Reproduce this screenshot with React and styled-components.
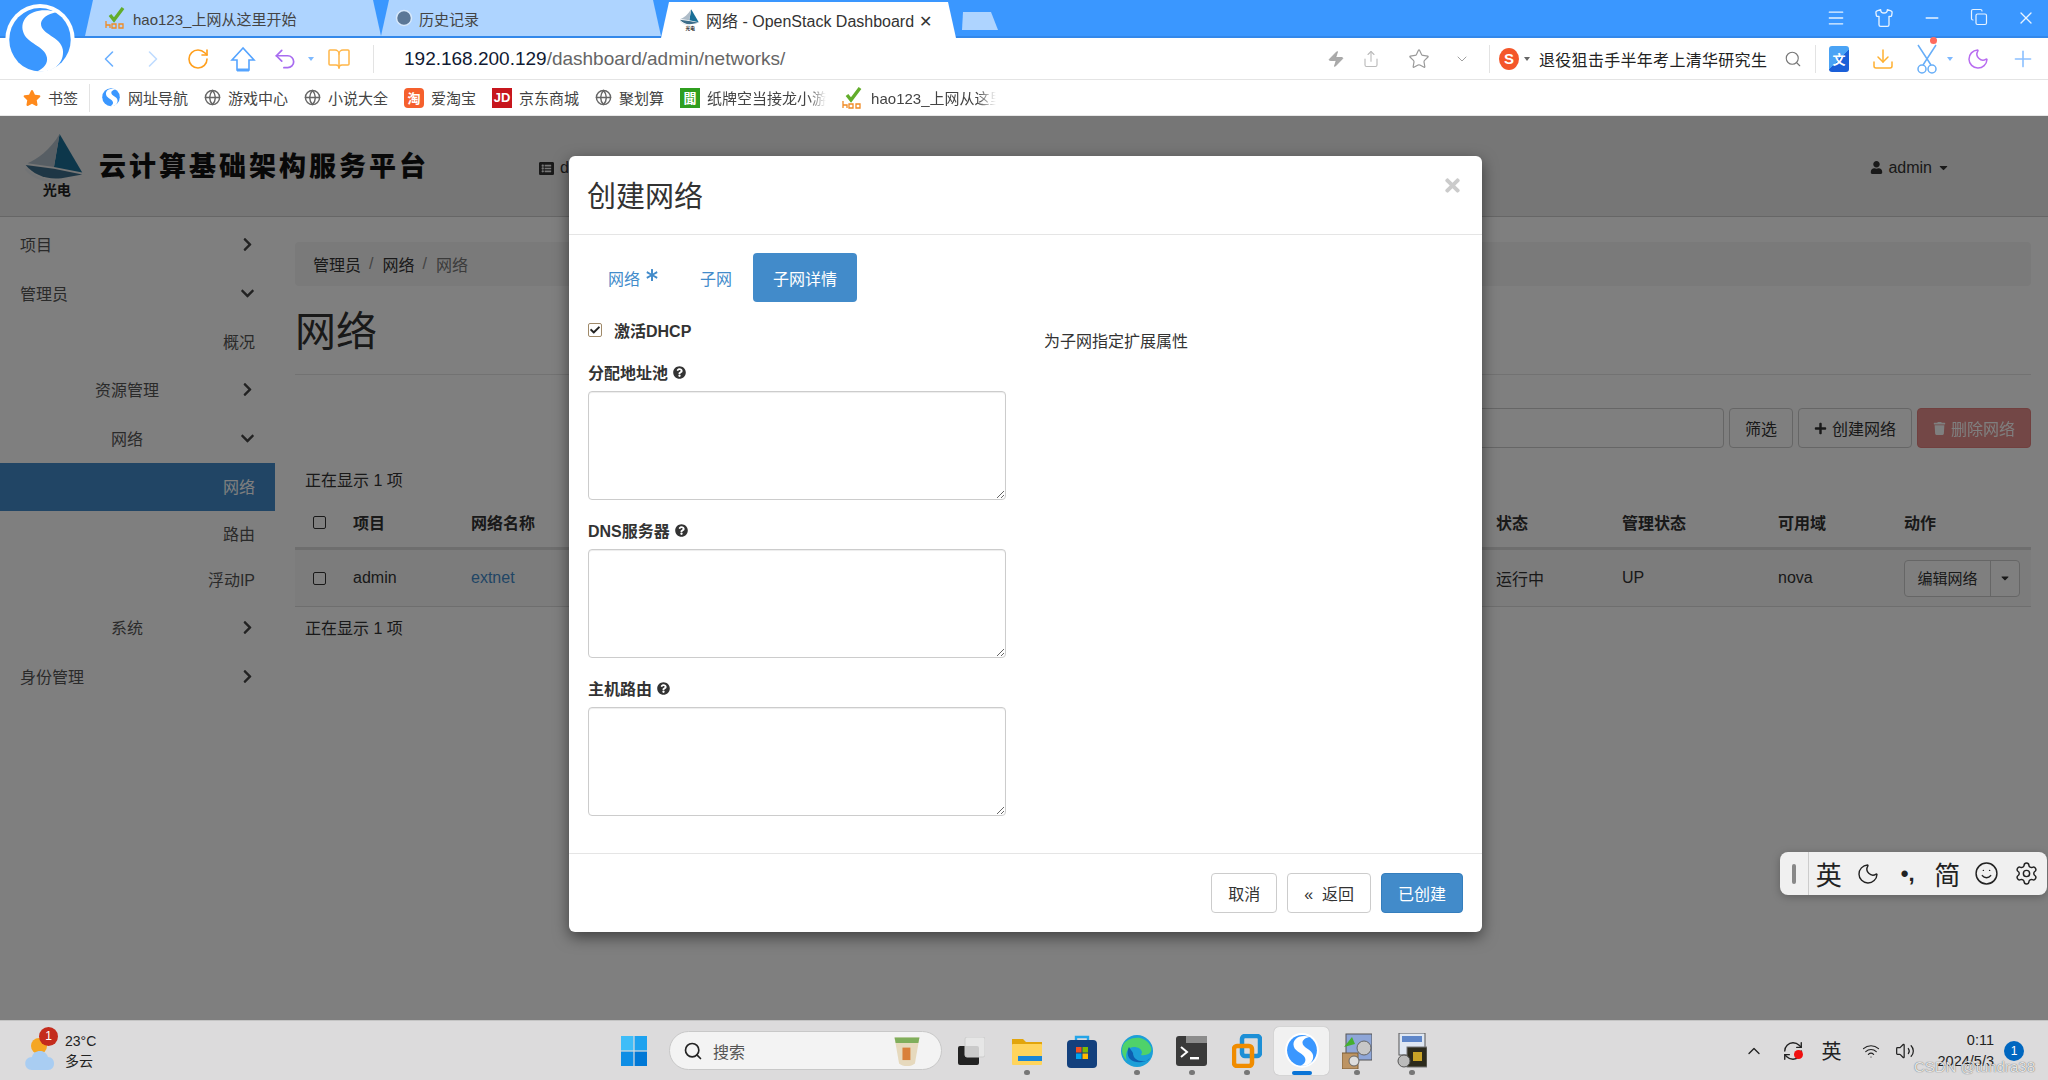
import React from "react";
import styled, { createGlobalStyle } from "styled-components";
import {
  ChevronLeft, ChevronRight, RotateCw, Undo2, BookOpen, Zap, Share, Star, ChevronDown, Search,
  Download, Moon, Plus, Menu, Shirt, Minus, Copy, X, Globe, Smile, Settings, Wifi, Volume2,
  ChevronUp, RefreshCw, Clock,
} from "lucide-react";
import {
  FaChevronRight, FaChevronDown, FaUser, FaCaretDown, FaPlus, FaTrash, FaQuestionCircle, FaAsterisk,
  FaTimes, FaListAlt, FaCheck, FaStar,
} from "react-icons/fa";

const GlobalStyle = createGlobalStyle`
  html, body { margin: 0; padding: 0; height: 1080px; overflow: hidden; background: #fff; }
  body { font-family: "Liberation Sans", "Noto Sans CJK SC", sans-serif; font-size: 16px; color: #333; }
  * { box-sizing: border-box; }
`;

const Screen = styled.div`
  width: 2048px;
  height: 1080px;
  display: flex;
  flex-direction: column;
  position: relative;
  overflow: hidden;
`;

/* ---------- browser chrome ---------- */
const TabStrip = styled.div`
  height: 38px;
  flex: none;
  background: #3a97ff;
  border-bottom: 2px solid #3388ea;
  display: flex;
  align-items: flex-end;
  padding-left: 85px;
`;
const BrowserTab = styled.div`
  width: ${(p) => p.$w}px;
  height: 36px;
  flex: none;
  display: flex;
  align-items: center;
  gap: 6px;
  padding-left: ${(p) => p.$pad}px;
  font-size: ${(p) => (p.$active ? 16 : 15)}px;
  white-space: nowrap;
  color: ${(p) => (p.$active ? "#333" : "#444")};
  background: ${(p) => (p.$active ? "#fff" : "#aed4ff")};
  clip-path: polygon(8px 0, calc(100% - 8px) 0, 100% 100%, 0 100%);
  margin-bottom: ${(p) => (p.$active ? "-2px" : "0")};
`;
const NewTab = styled.div`
  width: 40px;
  height: 18px;
  margin: 0 0 6px 2px;
  background: #aed4ff;
  clip-path: polygon(5px 0, 33px 0, 100% 100%, 4px 100%);
`;
const WindowControls = styled.div`
  margin-left: auto;
  align-self: center;
  display: flex;
  gap: 28px;
  padding-right: 12px;
  color: #e8f3ff;
`;
const BrowserLogo = styled.div`
  position: absolute;
  left: 5px;
  top: 4px;
`;
const Toolbar = styled.div`
  height: 42px;
  flex: none;
  background: #fff;
  border-bottom: 1px solid #e4e4e4;
  display: flex;
  align-items: center;
  padding-left: 100px;
`;
const ToolSlot = styled.span`
  position: relative;
  width: ${(p) => p.$w || 44}px;
  flex: none;
  display: flex;
  justify-content: center;
  align-items: center;
  color: ${(p) => p.$c || "#999"};
  svg { flex: none; }
`;
const ToolSep = styled.span`
  width: 1px;
  height: 28px;
  flex: none;
  background: #e3e3e3;
  margin: ${(p) => p.$m || "0 8px"};
`;
const Url = styled.div`
  font-size: 19px;
  width: 920px;
  flex: none;
  margin-left: 30px;
  color: #666;
  white-space: nowrap;
  b { font-weight: 400; color: #111a33; }
`;
const SearchHint = styled.span`
  font-size: 16px;
  letter-spacing: 0.3px;
  color: #222;
  white-space: nowrap;
  width: 232px;
  flex: none;
`;
const SogouBadge = styled.span`
  width: 20px;
  height: 22px;
  margin-left: 9px;
  border-radius: 50%;
  background: #f4562a;
  color: #fff;
  font-weight: 700;
  font-size: 15px;
  display: flex;
  align-items: center;
  justify-content: center;
  flex: none;
`;
const TinyCaret = styled.span`
  width: 0;
  height: 0;
  flex: none;
  margin: ${(p) => p.$m || "0 5px"};
  border-left: 3px solid transparent;
  border-right: 3px solid transparent;
  border-top: 4px solid ${(p) => p.$c || "#666"};
`;
const CutBadge = styled.span`
  position: absolute;
  right: 0;
  top: -7px;
  width: 7px;
  height: 7px;
  border-radius: 50%;
  background: #ff6b5e;
`;
const BookmarkBar = styled.div`
  height: 36px;
  flex: none;
  background: #fff;
  border-bottom: 1px solid #e8e8e8;
  display: flex;
  align-items: center;
  padding-left: 23px;
  font-size: 15px;
  color: #444;
`;
const Bookmark = styled.span`
  display: flex;
  align-items: center;
  gap: 7px;
  margin-right: ${(p) => p.$mr || 16}px;
  white-space: nowrap;
  flex: none;
`;
const BookmarkFade = styled.span`
  width: ${(p) => p.$w}px;
  overflow: hidden;
  white-space: nowrap;
  -webkit-mask-image: linear-gradient(90deg, #000 85%, transparent);
  mask-image: linear-gradient(90deg, #000 85%, transparent);
`;
const SquareIcon = styled.span`
  width: 20px;
  height: ${(p) => p.$h || 20}px;
  flex: none;
  display: flex;
  align-items: center;
  justify-content: center;
  font-size: 13px;
  font-weight: 700;
  color: #fff;
  background: ${(p) => p.$bg};
  border-radius: ${(p) => p.$r || 0}px;
`;

/* ---------- dashboard behind the dialog ---------- */
const Page = styled.div`
  flex: 1;
  position: relative;
  display: flex;
  flex-direction: column;
  min-height: 0;
  background: #fff;
`;
const TopNav = styled.header`
  height: 101px;
  flex: none;
  display: flex;
  align-items: center;
  background: #ececec;
  border-bottom: 1px solid #ccc;
  padding: 0 98px 0 20px;
`;
const PlatformTitle = styled.div`
  font-family: "Noto Sans CJK SC", sans-serif;
  font-weight: 900;
  font-size: 27px;
  letter-spacing: 3px;
  color: #111;
  margin: 0 0 4px 13px;
  white-space: nowrap;
  width: 440px;
  flex: none;
`;
const NavProject = styled.div`
  display: flex;
  align-items: center;
  gap: 6px;
  margin-top: 4px;
`;
const UserMenu = styled.div`
  margin-left: auto;
  margin-top: 3px;
  display: flex;
  align-items: center;
  gap: 5px;
`;
const Body = styled.div`
  flex: 1;
  display: flex;
  min-height: 0;
`;
const Sidebar = styled.nav`
  width: 275px;
  flex: none;
  padding-top: 3px;
`;
const NavRow = styled.div`
  height: ${(p) => p.$h}px;
  display: flex;
  align-items: center;
  gap: 6px;
  padding: 0 20px;
  color: ${(p) => (p.$active ? "#fff" : "#555")};
  background: ${(p) => (p.$active ? "#428bca" : "transparent")};
`;
const NavLabel = styled.span`
  flex: 1;
  margin-top: -2px;
  text-align: ${(p) => p.$align};
`;
const Main = styled.main`
  flex: 1;
  min-width: 0;
  padding: 25px 17px 0 20px;
`;
const Breadcrumb = styled.div`
  height: 44px;
  background: #f5f5f5;
  border-radius: 4px;
  display: flex;
  align-items: center;
  padding-left: 18px;
  color: #333;
  span { margin-right: 9px; color: #888; }
  i { font-style: normal; color: #777; }
  em { font-style: normal; margin-right: 8px; }
`;
const PageTitle = styled.h1`
  margin: 0;
  height: 89px;
  line-height: 92px;
  font-size: 41px;
  font-weight: 400;
  border-bottom: 1px solid #e5e5e5;
`;
const Actions = styled.div`
  margin-top: 33px;
  height: 40px;
  display: flex;
  justify-content: flex-end;
  gap: 5px;
`;
const FilterInput = styled.div`
  width: 500px;
  border: 1px solid #ccc;
  border-radius: 4px;
`;
const Btn = styled.button`
  font: inherit;
  height: 40px;
  padding: 0 ${(p) => p.$px || 15}px;
  border: 1px solid ${(p) => (p.$kind === "primary" ? "#357ebd" : p.$kind === "danger" ? "#d43f3a" : "#ccc")};
  border-radius: 4px;
  display: flex;
  align-items: center;
  gap: 5px;
  white-space: nowrap;
  color: ${(p) => (p.$kind ? "#fff" : "#333")};
  background: ${(p) => (p.$kind === "primary" ? "#428bca" : p.$kind === "danger" ? "#d9534f" : "#fff")};
  opacity: ${(p) => (p.$kind === "danger" ? 0.65 : 1)};
`;
const Count = styled.div`
  padding-left: 10px;
  height: 22px;
  line-height: 22px;
  margin-top: ${(p) => p.$mt}px;
`;
const GridRow = styled.div`
  display: grid;
  grid-template-columns: 58px 118px 1025px 126px 156px 126px 1fr;
  align-items: center;
  height: ${(p) => p.$h}px;
  padding-top: ${(p) => (p.$head ? 5 : 0)}px;
  font-weight: ${(p) => (p.$head ? 700 : 400)};
  background: ${(p) => (p.$head ? "transparent" : "#f9f9f9")};
  border-bottom: ${(p) => (p.$head ? "3px solid #ddd" : "1px solid #ddd")};
`;
const RowCheck = styled.span`
  width: 13px;
  height: 13px;
  margin-left: 18px;
  border: 1px solid #333;
  border-radius: 2px;
  background: #fff;
`;
const TableLink = styled.span`
  color: #428bca;
`;
const SplitBtn = styled.div`
  width: 116px;
  height: 37px;
  display: flex;
  align-items: center;
  border: 1px solid #ccc;
  border-radius: 4px;
  background: #fff;
  font-size: 15px;
  span:first-child { width: 86px; text-align: center; border-right: 1px solid #ccc; line-height: 35px; }
  span:last-child { flex: 1; display: flex; justify-content: center; }
`;

/* ---------- dialog ---------- */
const Backdrop = styled.div`
  position: absolute;
  inset: 0;
  background: rgba(0, 0, 0, 0.5);
  padding: 40px 0 0 569px;
`;
const Modal = styled.div`
  width: 913px;
  height: 776px;
  background: #fff;
  border-radius: 6px;
  box-shadow: 0 5px 15px rgba(0, 0, 0, 0.5);
  display: flex;
  flex-direction: column;
`;
const ModalHead = styled.div`
  height: 79px;
  flex: none;
  display: flex;
  align-items: center;
  justify-content: space-between;
  padding: 0 19px 0 18px;
  border-bottom: 1px solid #e5e5e5;
`;
const ModalTitle = styled.h4`
  margin: 0 0 3px;
  font-size: 29px;
  font-weight: 400;
`;
const CloseIcon = styled.span`
  color: #cbcbcb;
  display: flex;
  margin-bottom: 20px;
`;
const ModalBody = styled.div`
  flex: 1;
  padding: 18px 19px 0;
`;
const Pills = styled.div`
  display: flex;
  height: 49px;
  margin-bottom: 16px;
`;
const Pill = styled.div`
  height: 49px;
  padding: 0 20px;
  margin-right: ${(p) => p.$mr || 0}px;
  border-radius: 4px;
  display: flex;
  align-items: center;
  gap: 6px;
  color: ${(p) => (p.$active ? "#fff" : "#428bca")};
  background: ${(p) => (p.$active ? "#428bca" : "transparent")};
  svg { margin-top: -6px; }
`;
const Columns = styled.div`
  display: flex;
`;
const LeftCol = styled.div`
  width: 418px;
  flex: none;
`;
const RightCol = styled.div`
  margin: 0 0 0 38px;
  padding-top: 10px;
`;
const CheckRow = styled.div`
  height: 24px;
  display: flex;
  align-items: center;
  font-weight: 700;
  color: #333;
  margin-bottom: 18px;
`;
const CheckBox = styled.span`
  width: 14px;
  height: 14px;
  margin: 0 12px 0 0;
  border: 1px solid #a08a6a;
  border-radius: 2px;
  display: flex;
  align-items: center;
  justify-content: center;
  color: #222;
`;
const FieldLabel = styled.label`
  display: flex;
  align-items: center;
  gap: 5px;
  font-weight: 700;
  height: 24px;
`;
const Textarea = styled.textarea`
  display: block;
  width: 418px;
  height: 109px;
  margin: 7px 0 ${(p) => p.$mb}px;
  border: 1px solid #ccc;
  border-radius: 4px;
  box-shadow: inset 0 1px 1px rgba(0, 0, 0, 0.075);
  outline: none;
  font: inherit;
`;
const ModalFoot = styled.div`
  height: 79px;
  flex: none;
  border-top: 1px solid #e5e5e5;
  display: flex;
  justify-content: flex-end;
  align-items: flex-start;
  gap: 10px;
  padding: 19px 19px 0 0;
`;

/* ---------- floating IME bar ---------- */
const ImeBar = styled.div`
  position: absolute;
  left: 1780px;
  top: 736px;
  width: 267px;
  height: 43px;
  background: #f0f0f0;
  border-radius: 8px;
  box-shadow: 0 2px 8px rgba(0, 0, 0, 0.25);
  display: flex;
  align-items: center;
  color: #222;
  font-size: 26px;
`;
const ImeGrip = styled.span`
  width: 29px;
  height: 100%;
  flex: none;
  border-right: 1px solid #ccc;
  display: flex;
  align-items: center;
  justify-content: center;
  &::before {
    content: "";
    width: 4px;
    height: 20px;
    border-radius: 2px;
    background: #888;
  }
`;
const ImeCell = styled.span`
  width: 39.5px;
  flex: none;
  text-align: center;
  display: flex;
  justify-content: center;
  font-size: ${(p) => (p.$punct ? 22 : 26)}px;
  font-weight: ${(p) => (p.$punct ? 700 : 400)};
`;

/* ---------- windows taskbar ---------- */
const Taskbar = styled.div`
  height: 60px;
  flex: none;
  background: #dcdbdc;
  border-top: 1px solid #c4c4c4;
  display: flex;
  align-items: center;
  position: relative;
`;
const Weather = styled.div`
  width: 621px;
  flex: none;
  display: flex;
  align-items: center;
  padding-left: 25px;
  gap: 9px;
  font-size: 14px;
  line-height: 20px;
  color: #222;
`;
const WeatherIcon = styled.div`
  position: relative;
  width: 31px;
  height: 36px;
  margin-top: 6px;
`;
const RedDot = styled.span`
  position: absolute;
  left: 14px;
  top: -9px;
  width: 19px;
  height: 19px;
  border-radius: 50%;
  background: #c42b1c;
  color: #fff;
  font-size: 12px;
  line-height: 19px;
  text-align: center;
`;
const WinSearch = styled.div`
  width: 273px;
  height: 39px;
  margin: 0 13px 0 22px;
  border-radius: 20px;
  background: #f3f3f3;
  border: 1px solid #c8c8c8;
  display: flex;
  align-items: center;
  padding: 0 20px 0 13px;
  gap: 10px;
  color: #555;
  flex: none;
  span { flex: 1; }
`;
const TaskViewSlot = styled.div`
  width: 32px;
  margin-right: 12px;
  flex: none;
  display: flex;
  justify-content: center;
`;
const TaskSlot = styled.div`
  position: relative;
  width: 55px;
  height: 48px;
  flex: none;
  display: flex;
  align-items: center;
  justify-content: center;
  border-radius: 5px;
  background: ${(p) => (p.$active ? "#f1f1f1" : "transparent")};
  box-shadow: ${(p) => (p.$active ? "0 0 1px rgba(0,0,0,.3)" : "none")};
  &::after {
    content: "";
    display: ${(p) => (p.$dot ? "block" : "none")};
    position: absolute;
    left: 50%;
    bottom: 0;
    transform: translateX(-50%);
    width: ${(p) => (p.$active ? 20 : 6)}px;
    height: ${(p) => (p.$active ? 4 : 5)}px;
    border-radius: 3px;
    background: ${(p) => (p.$active ? "#0a74d6" : "#777")};
  }
`;
const Tray = styled.div`
  margin-left: auto;
  display: flex;
  align-items: center;
  color: #222;
  font-size: 20px;
  padding-right: 24px;
`;
const TrayCell = styled.span`
  width: ${(p) => p.$w || 39}px;
  display: flex;
  justify-content: center;
  position: relative;
`;
const RecDot = styled.span`
  position: absolute;
  left: 21px;
  top: 10px;
  width: 9px;
  height: 9px;
  border-radius: 50%;
  background: #f01010;
`;
const Clocks = styled.div`
  width: 74px;
  text-align: right;
  font-size: 14.5px;
  line-height: 21px;
  color: #222;
`;
const NotifyDot = styled.span`
  width: 20px;
  height: 20px;
  margin-left: 10px;
  border-radius: 50%;
  background: #0067c0;
  color: #fff;
  font-size: 12px;
  line-height: 20px;
  text-align: center;
`;
const Watermark = styled.div`
  position: absolute;
  right: 13px;
  bottom: 5px;
  font-size: 15px;
  color: rgba(255, 255, 255, 0.85);
  text-shadow: 0 0 1px rgba(40, 40, 40, 0.9);
`;

/* ---------- drawings ---------- */
const HaoIcon = () => (
  <svg width="22" height="22" viewBox="0 0 22 22">
    <path d="M5 8l4 5 9-12" fill="none" stroke="#62ad2b" strokeWidth="3.4" />
    <path d="M1 14v7M1 18h4v3M7 17h4v4H7zM14 17h4v4h-4z" fill="none" stroke="#f08a24" strokeWidth="1.3" />
  </svg>
);
const SailLogo = ({ size = 70 }) => (
  <svg width={size} height={size} viewBox="0 0 70 70" style={{ flex: "none" }}>
    <path d="M42 1L66 42 36 36z" fill="#1a6f97" />
    <path d="M42 1L36 36 8 32C18 28 32 18 42 1z" fill="#aebcc8" />
    <path d="M6 34L36 38 66 44 44 48C28 50 14 44 6 34z" fill="#3d6d8a" />
    <path d="M6 38c10 12 26 14 36 13" fill="none" stroke="#e2e6ea" strokeWidth="2.5" />
    <text x="24" y="66" fontSize="15" fontWeight="700" fill="#222" fontFamily="Noto Sans CJK SC, sans-serif">光电</text>
  </svg>
);
const SogouLogo = ({ size = 70 }) => (
  <svg width={size} height={size * 1.02} viewBox="0 0 70 72">
    <ellipse cx="35" cy="36" rx="35" ry="36" fill="#fff" />
    <ellipse cx="35" cy="36" rx="31" ry="32" fill="#3a97ff" />
    <path d="M52 8C28 2 14 14 18 28c3 12 22 14 24 26 1 6-3 11-10 14 16 2 28-8 26-22-2-13-22-15-22-26 0-5 6-10 16-12z" fill="#fff" />
  </svg>
);
const HomeArrow = () => (
  <svg width="26" height="28" viewBox="0 0 26 28" fill="none" stroke="#55a4ff" strokeWidth="1.6">
    <path d="M13 3L2 15h5v10h12V15h5z" />
    <path d="M7 25h12" strokeWidth="3" />
  </svg>
);
const CutIcon = () => (
  <svg width="22" height="30" viewBox="0 0 22 30" fill="none" stroke="#67aef8" strokeWidth="1.5">
    <path d="M2 1l13 20M20 1L7 21" />
    <circle cx="6" cy="25" r="4" />
    <circle cx="16" cy="25" r="4" />
  </svg>
);
const WinLogo = () => (
  <svg width="26" height="30" viewBox="0 0 26 30">
    <rect width="12.4" height="14.4" fill="#3fbdf8" />
    <rect x="13.6" width="12.4" height="14.4" fill="#1ea2ef" />
    <rect y="15.6" width="12.4" height="14.4" fill="#0f8ee5" />
    <rect x="13.6" y="15.6" width="12.4" height="14.4" fill="#0078d6" />
  </svg>
);
const TaskView = () => (
  <svg width="27" height="28" viewBox="0 0 27 28">
    <rect x="0" y="9" width="21" height="19" rx="2" fill="#222" />
    <rect x="7" y="0" width="20" height="20" rx="2" fill="#e8e8e8" fillOpacity=".85" stroke="#ccc" />
  </svg>
);
const Explorer = () => (
  <svg width="30" height="28" viewBox="0 0 30 28">
    <path d="M0 2h11l3 3h16v5H0z" fill="#e2a50c" />
    <rect y="7" width="30" height="21" rx="1" fill="#ffd45c" />
    <rect x="6" y="19" width="24" height="5" fill="#1b86d6" />
  </svg>
);
const Store = () => (
  <svg width="30" height="34" viewBox="0 0 30 34">
    <path d="M9 7V3h12v4" fill="none" stroke="#25a5e8" strokeWidth="2.4" />
    <rect y="6" width="30" height="28" rx="4" fill="#13407d" />
    <rect x="9" y="13" width="5.5" height="5.5" fill="#f25022" />
    <rect x="15.5" y="13" width="5.5" height="5.5" fill="#7fba00" />
    <rect x="9" y="19.5" width="5.5" height="5.5" fill="#00a4ef" />
    <rect x="15.5" y="19.5" width="5.5" height="5.5" fill="#ffb900" />
  </svg>
);
const Edge = () => (
  <svg width="32" height="32" viewBox="0 0 32 32">
    <circle cx="16" cy="16" r="16" fill="#1c9fd8" />
    <path d="M2 10C6 2 24-2 30 12c2 6-4 9-10 8 4-6-6-10-11-7-4 3-5 8-3 13C1 21 0 15 2 10z" fill="#4fd26a" />
    <path d="M12 18c0 6 6 9 12 8 2 0 4-1 5-3-4 5-15 6-20 1-3-3-3-9-1-12 1 2 3 4 4 6z" fill="#0d5fb0" />
  </svg>
);
const Terminal = () => (
  <svg width="31" height="30" viewBox="0 0 31 30">
    <rect width="31" height="30" rx="3" fill="#3a3a3a" />
    <rect x="10" width="21" height="7" fill="#8c8c8c" />
    <path d="M5 11l6 5-6 5" fill="none" stroke="#fff" strokeWidth="2" />
    <rect x="14" y="21" width="9" height="2.4" fill="#fff" />
  </svg>
);
const VmWare = () => (
  <svg width="30" height="34" viewBox="0 0 30 34">
    <rect x="10" y="2" width="18" height="20" rx="3" fill="none" stroke="#1d8fd6" strokeWidth="4.5" />
    <rect x="2" y="12" width="18" height="20" rx="3" fill="none" stroke="#f08c00" strokeWidth="4.5" />
  </svg>
);
const BackupApp = () => (
  <svg width="30" height="36" viewBox="0 0 30 36">
    <rect x="4" y="1" width="26" height="26" fill="#8ea6d8" stroke="#555" />
    <circle cx="22" cy="15" r="7" fill="#c7c7c7" stroke="#666" />
    <path d="M2 14l8-10 3 7z" fill="#44b02f" />
    <rect x="0" y="20" width="16" height="16" fill="#bd9463" stroke="#7a5c36" />
    <circle cx="12" cy="28" r="5" fill="#ddd" stroke="#666" />
  </svg>
);
const LockApp = () => (
  <svg width="30" height="36" viewBox="0 0 30 36">
    <rect x="2" y="0" width="26" height="22" fill="#dfe7f2" stroke="#555" />
    <rect x="5" y="3" width="20" height="6" fill="#5e86c9" />
    <rect x="10" y="14" width="20" height="20" fill="#2c2a1c" stroke="#777" />
    <rect x="16" y="19" width="9" height="9" fill="#c9a327" />
    <circle cx="7" cy="28" r="6" fill="#bbb" stroke="#555" />
  </svg>
);
const Teacup = () => (
  <svg width="28" height="34" viewBox="0 0 24 30">
    <path d="M1 3h22l-4 23c-3 3-11 3-14 0z" fill="#e6d9bd" />
    <path d="M1 3h22l-1 5H2z" fill="#7fae5b" />
    <rect x="8" y="12" width="7" height="11" fill="#d9803b" />
  </svg>
);
const WeatherArt = () => (
  <svg width="31" height="36" viewBox="0 0 31 36">
    <circle cx="14" cy="10" r="8" fill="#f5a623" />
    <path d="M7 34c-9 0-9-13 0-13 1-7 13-9 16 0 8 0 8 13 0 13z" fill="#a9cdf2" />
  </svg>
);

const sideItems = [
  { label: "项目", h: 49, align: "left", arrow: "right" },
  { label: "管理员", h: 49, align: "left", arrow: "down" },
  { label: "概况", h: 47, align: "right" },
  { label: "资源管理", h: 49, align: "center", arrow: "right" },
  { label: "网络", h: 49, align: "center", arrow: "down" },
  { label: "网络", h: 48, align: "right", active: true },
  { label: "路由", h: 46, align: "right" },
  { label: "浮动IP", h: 46, align: "right" },
  { label: "系统", h: 49, align: "center", arrow: "right" },
  { label: "身份管理", h: 49, align: "left", arrow: "right" },
];

const dock = [
  { el: <Explorer />, dot: true },
  { el: <Store /> },
  { el: <Edge />, dot: true },
  { el: <Terminal />, dot: true },
  { el: <VmWare />, dot: true },
  { el: <SogouLogo size={34} />, dot: true, active: true },
  { el: <BackupApp />, dot: true },
  { el: <LockApp />, dot: true },
];

export default function App() {
  return (
    <Screen>
      <GlobalStyle />
      <TabStrip>
        <BrowserTab $w={296} $pad={20}><HaoIcon />hao123_上网从这里开始</BrowserTab>
        <BrowserTab $w={280} $pad={14}><Clock size={18} color="#5b7796" fill="#5b7796" stroke="#d6e8fb" />历史记录</BrowserTab>
        <BrowserTab $w={295} $active $pad={17}><SailLogo size={22} />网络 - OpenStack Dashboard ✕</BrowserTab>
        <NewTab />
        <WindowControls>
          <Menu size={20} strokeWidth={1.6} />
          <Shirt size={20} strokeWidth={1.6} />
          <Minus size={20} strokeWidth={1.6} />
          <Copy size={18} strokeWidth={1.6} />
          <X size={20} strokeWidth={1.6} />
        </WindowControls>
      </TabStrip>
      <BrowserLogo><SogouLogo /></BrowserLogo>

      <Toolbar>
        <ToolSlot $w={18} $c="#6cb0ff"><ChevronLeft size={28} strokeWidth={1.4} /></ToolSlot>
        <ToolSlot $w={70} $c="#bfdcff"><ChevronRight size={28} strokeWidth={1.4} /></ToolSlot>
        <ToolSlot $w={20} $c="#ff9f1c"><RotateCw size={24} strokeWidth={1.6} /></ToolSlot>
        <ToolSlot $w={70}><HomeArrow /></ToolSlot>
        <ToolSlot $w={14} $c="#a86cf0"><Undo2 size={26} strokeWidth={1.6} /></ToolSlot>
        <TinyCaret $m="0 0 0 16px" $c="#7db9ff" />
        <ToolSlot $w={50} $c="#ffb648"><BookOpen size={24} strokeWidth={1.5} /></ToolSlot>
        <ToolSep $m="0 0 0 9px" />
        <Url><b>192.168.200.129</b>/dashboard/admin/networks/</Url>
        <ToolSlot $w={24}><Zap size={18} fill="#aaa" strokeWidth={1} /></ToolSlot>
        <ToolSlot $w={46} $c="#bbb"><Share size={18} strokeWidth={1.5} /></ToolSlot>
        <ToolSlot $w={50} $c="#999"><Star size={22} strokeWidth={1.3} /></ToolSlot>
        <ToolSlot $w={36} $c="#999"><ChevronDown size={16} strokeWidth={1.4} /></ToolSlot>
        <ToolSep $m="0 0 0 9px" />
        <SogouBadge>S</SogouBadge>
        <TinyCaret $m="0 9px 0 5px" />
        <SearchHint>退役狙击手半年考上清华研究生</SearchHint>
        <ToolSlot $w={44} $c="#777"><Search size={18} strokeWidth={1.5} /></ToolSlot>
        <ToolSep $m="0 13px 0 0" />
        <SquareIcon $bg="linear-gradient(135deg, #4aa3f5 50%, #1b5fd8 50%)" $r={3} $h={26}>文</SquareIcon>
        <ToolSlot $w={68} $c="#ffb030"><Download size={24} strokeWidth={1.5} /></ToolSlot>
        <ToolSlot $w={20}><CutIcon /><CutBadge /></ToolSlot>
        <TinyCaret $m="0 0 0 10px" $c="#7db9ff" />
        <ToolSlot $w={50} $c="#b86cf0"><Moon size={24} strokeWidth={1.5} /></ToolSlot>
        <ToolSlot $w={40} $c="#8cc0ff"><Plus size={26} strokeWidth={1.5} /></ToolSlot>
      </Toolbar>

      <BookmarkBar>
        <Bookmark $mr={11}><FaStar size={18} color="#ff8a1c" />书签</Bookmark>
        <ToolSep $m="0 11px 0 0" />
        <Bookmark><SogouLogo size={20} />网址导航</Bookmark>
        <Bookmark><Globe size={17} color="#666" />游戏中心</Bookmark>
        <Bookmark><Globe size={17} color="#666" />小说大全</Bookmark>
        <Bookmark><SquareIcon $bg="#f5602d" $r={4}>淘</SquareIcon>爱淘宝</Bookmark>
        <Bookmark><SquareIcon $bg="#c7161d">JD</SquareIcon>京东商城</Bookmark>
        <Bookmark><Globe size={17} color="#666" />聚划算</Bookmark>
        <Bookmark><SquareIcon $bg="#2f9e1f">聞</SquareIcon><BookmarkFade $w={119}>纸牌空当接龙小游戏</BookmarkFade></Bookmark>
        <Bookmark><HaoIcon /><BookmarkFade $w={125}>hao123_上网从这里开始</BookmarkFade></Bookmark>
      </BookmarkBar>

      <Page>
        <TopNav>
          <SailLogo size={66} />
          <PlatformTitle>云计算基础架构服务平台</PlatformTitle>
          <NavProject><FaListAlt size={15} />default</NavProject>
          <UserMenu><FaUser size={13} />admin<FaCaretDown size={13} /></UserMenu>
        </TopNav>
        <Body>
          <Sidebar>
            {sideItems.map((item, i) => (
              <NavRow key={i} $h={item.h} $active={item.active}>
                <NavLabel $align={item.align}>{item.label}</NavLabel>
                {item.arrow === "right" && <FaChevronRight size={15} color="#444" />}
                {item.arrow === "down" && <FaChevronDown size={15} color="#444" />}
              </NavRow>
            ))}
          </Sidebar>
          <Main>
            <Breadcrumb><em>管理员</em><span>/</span><em>网络</em><span>/</span><i>网络</i></Breadcrumb>
            <PageTitle>网络</PageTitle>
            <Actions>
              <FilterInput />
              <Btn>筛选</Btn>
              <Btn><FaPlus size={13} />创建网络</Btn>
              <Btn $kind="danger"><FaTrash size={13} />删除网络</Btn>
            </Actions>
            <Count $mt={22}>正在显示 1 项</Count>
            <GridRow $head $h={58}>
              <RowCheck />
              <span>项目</span><span>网络名称</span><span>状态</span><span>管理状态</span><span>可用域</span><span>动作</span>
            </GridRow>
            <GridRow $h={57}>
              <RowCheck />
              <span>admin</span><TableLink>extnet</TableLink><span>运行中</span><span>UP</span><span>nova</span>
              <SplitBtn><span>编辑网络</span><span><FaCaretDown size={12} /></span></SplitBtn>
            </GridRow>
            <Count $mt={11}>正在显示 1 项</Count>
          </Main>
        </Body>

        <Backdrop>
          <Modal>
            <ModalHead>
              <ModalTitle>创建网络</ModalTitle>
              <CloseIcon><FaTimes size={21} /></CloseIcon>
            </ModalHead>
            <ModalBody>
              <Pills>
                <Pill $mr={2}>网络<FaAsterisk size={12} /></Pill>
                <Pill $mr={1}>子网</Pill>
                <Pill $active>子网详情</Pill>
              </Pills>
              <Columns>
                <LeftCol>
                  <CheckRow><CheckBox><FaCheck size={10} /></CheckBox>激活DHCP</CheckRow>
                  <FieldLabel>分配地址池<FaQuestionCircle size={13} /></FieldLabel>
                  <Textarea $mb={18} />
                  <FieldLabel>DNS服务器<FaQuestionCircle size={13} /></FieldLabel>
                  <Textarea $mb={18} />
                  <FieldLabel>主机路由<FaQuestionCircle size={13} /></FieldLabel>
                  <Textarea $mb={0} />
                </LeftCol>
                <RightCol>为子网指定扩展属性</RightCol>
              </Columns>
            </ModalBody>
            <ModalFoot>
              <Btn $px={16}>取消</Btn>
              <Btn $px={16}>« &nbsp;返回</Btn>
              <Btn $px={16} $kind="primary">已创建</Btn>
            </ModalFoot>
          </Modal>
        </Backdrop>
        <ImeBar>
          <ImeGrip />
          <ImeCell>英</ImeCell>
          <ImeCell><Moon size={24} strokeWidth={1.4} /></ImeCell>
          <ImeCell $punct>•,</ImeCell>
          <ImeCell>简</ImeCell>
          <ImeCell><Smile size={25} strokeWidth={1.4} /></ImeCell>
          <ImeCell><Settings size={25} strokeWidth={1.4} /></ImeCell>
        </ImeBar>
      </Page>

      <Taskbar>
        <Weather>
          <WeatherIcon><WeatherArt /><RedDot>1</RedDot></WeatherIcon>
          <div>23°C<br />多云</div>
        </Weather>
        <WinLogo />
        <WinSearch><Search size={20} color="#222" strokeWidth={2} /><span>搜索</span><Teacup /></WinSearch>
        <TaskViewSlot><TaskView /></TaskViewSlot>
        {dock.map((d, i) => (
          <TaskSlot key={i} $dot={d.dot} $active={d.active}>{d.el}</TaskSlot>
        ))}
        <Tray>
          <TrayCell><ChevronUp size={20} strokeWidth={1.6} /></TrayCell>
          <TrayCell><RefreshCw size={22} strokeWidth={1.5} /><RecDot /></TrayCell>
          <TrayCell>英</TrayCell>
          <TrayCell><Wifi size={18} strokeWidth={1.6} /></TrayCell>
          <TrayCell $w={30}><Volume2 size={20} strokeWidth={1.5} /></TrayCell>
          <Clocks>0:11<br />2024/5/3</Clocks>
          <NotifyDot>1</NotifyDot>
        </Tray>
        <Watermark>CSDN @tundra38</Watermark>
      </Taskbar>
    </Screen>
  );
}
